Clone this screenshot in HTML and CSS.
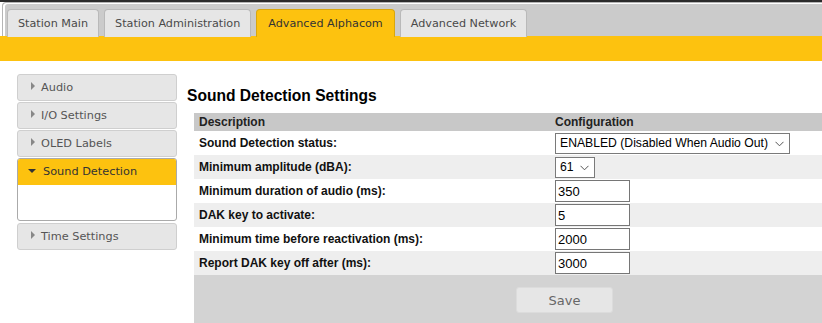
FILE: index.html
```html
<!DOCTYPE html>
<html lang="en">

<head>
    <meta charset="UTF-8">
    <meta name="viewport" content="width=device-width, initial-scale=1.0">
    <title>Sound Detection Settings</title>
    <link rel="stylesheet" href="styles.css">
</head>

<body>
    <div class="topline"></div>
    <div class="tabbar">
        <ul class="tabs">
            <li><a href="#">Station Main</a></li>
            <li><a href="#">Station Administration</a></li>
            <li class="active"><a href="#">Advanced Alphacom</a></li>
            <li><a href="#">Advanced Network</a></li>
        </ul>
    </div>
    <div class="band"></div>

    <div class="main">
        <ul class="side">
            <li class="item"><span class="arrow"></span>Audio</li>
            <li class="item"><span class="arrow"></span>I/O Settings</li>
            <li class="item"><span class="arrow"></span>OLED Labels</li>
            <li class="item open">
                <div class="item-head"><span class="arrow down"></span>Sound Detection</div>
                <div class="item-body"></div>
            </li>
            <li class="item"><span class="arrow"></span>Time Settings</li>
        </ul>

        <div class="content">
            <h2>Sound Detection Settings</h2>
            <div class="table">
                <div class="row head">
                    <div class="desc">Description</div>
                    <div class="conf">Configuration</div>
                </div>
                <div class="row">
                    <div class="desc">Sound Detection status:</div>
                    <div class="conf">
                        <div class="select wide">
                            <select>
                                <option>ENABLED (Disabled When Audio Out)</option>
                                <option>DISABLED</option>
                            </select>
                            <svg class="chev" width="9" height="6" viewBox="0 0 9 6"><path d="M0.5 0.8 L4.5 4.8 L8.5 0.8" fill="none" stroke="#555" stroke-width="1"/></svg>
                        </div>
                    </div>
                </div>
                <div class="row alt">
                    <div class="desc">Minimum amplitude (dBA):</div>
                    <div class="conf">
                        <div class="select small">
                            <select>
                                <option>61</option>
                            </select>
                            <svg class="chev" width="9" height="6" viewBox="0 0 9 6"><path d="M0.5 0.8 L4.5 4.8 L8.5 0.8" fill="none" stroke="#555" stroke-width="1"/></svg>
                        </div>
                    </div>
                </div>
                <div class="row">
                    <div class="desc">Minimum duration of audio (ms):</div>
                    <div class="conf"><input type="text" value="350"></div>
                </div>
                <div class="row alt">
                    <div class="desc">DAK key to activate:</div>
                    <div class="conf"><input type="text" value="5"></div>
                </div>
                <div class="row">
                    <div class="desc">Minimum time before reactivation (ms):</div>
                    <div class="conf"><input type="text" value="2000"></div>
                </div>
                <div class="row alt">
                    <div class="desc">Report DAK key off after (ms):</div>
                    <div class="conf"><input type="text" value="3000"></div>
                </div>
                <div class="foot">
                    <button class="save">Save</button>
                </div>
            </div>
        </div>
    </div>
</body>

</html>
```

FILE: styles.css
```css
* {
    margin: 0;
    padding: 0;
    box-sizing: border-box;
}

body {
    background-color: white;
    font-family: "Liberation Sans", Arial, sans-serif;
    overflow: hidden;
}

.topline {
    height: 2px;
    background-color: #2b2b2b;
}

.tabbar {
    height: 34px;
    margin-left: 2px;
    padding: 6px 0 0 4px;
    background-color: #cbcbcb;
    border-top: 1px solid #b5b5b5;
    border-left: 1px solid #b5b5b5;
    border-top-left-radius: 4px;
    box-shadow: inset 2px 1px 0 #fff;
}

.tabs {
    display: flex;
    gap: 5px;
    list-style: none;
    height: 100%;
}

.tabs li {
    height: 28px;
    border: 1px solid #b9b9b9;
    border-bottom: none;
    border-radius: 4px 4px 0 0;
    background-color: #e6e6e6;
}

.tabs a {
    display: block;
    padding: 0 10px;
    line-height: 27px;
    font-family: "DejaVu Sans", Verdana, sans-serif;
    font-size: 11.2px;
    color: #4a4a4a;
    text-decoration: none;
}

.tabs li.active {
    background-color: #fdc20f;
    border-color: #d9a70c;
}

.tabs li.active a {
    padding: 0 11px;
    color: #333;
}

.band {
    height: 25px;
    background-color: #fdc20f;
}

.main {
    display: flex;
    padding-top: 13px;
}

.side {
    list-style: none;
    width: 160px;
    margin-left: 17px;
    flex-shrink: 0;
}

.item {
    height: 27px;
    margin-bottom: 1px;
    padding-left: 13px;
    line-height: 26px;
    background-color: #e6e6e6;
    border: 1px solid #cfcfcf;
    border-radius: 3px;
    font-family: "DejaVu Sans", Verdana, sans-serif;
    font-size: 11.3px;
    color: #555;
}

.arrow {
    display: inline-block;
    width: 0;
    height: 0;
    margin-right: 6px;
    vertical-align: 1px;
    border-top: 4px solid transparent;
    border-bottom: 4px solid transparent;
    border-left: 4px solid #888;
}

.arrow.down {
    margin-right: 7px;
    vertical-align: 2px;
    border-left: 4px solid transparent;
    border-right: 4px solid transparent;
    border-top: 4px solid #333;
    border-bottom: none;
}

.item.open {
    height: 63px;
    padding-left: 0;
    margin-bottom: 2px;
    background-color: white;
    border-color: #aaa;
    overflow: hidden;
}

.item-head {
    height: 26px;
    padding-left: 10px;
    background-color: #fdc20f;
    color: #333;
}

.content {
    flex: 1;
    padding-left: 10px;
}

h2 {
    margin-top: 13px;
    margin-bottom: 8px;
    font-size: 15.6px;
    font-weight: bold;
    color: #000;
    line-height: 18px;
}

.table {
    margin-left: 7px;
    width: 640px;
}

.row {
    display: flex;
    height: 24px;
    align-items: center;
    font-size: 12px;
    font-weight: bold;
    color: #111;
}

.row.head {
    height: 18px;
    background-color: #c8c8c8;
    color: #222;
}

.row.alt {
    background-color: #eeeeee;
}

.desc {
    width: 361px;
    padding-left: 5px;
}

.conf {
    flex: 1;
}

.select {
    position: relative;
    display: inline-block;
    vertical-align: top;
}

.select select {
    appearance: none;
    height: 21px;
    padding-left: 4px;
    border: 1px solid #7a7a7a;
    background-color: white;
    font-family: "Liberation Sans", Arial, sans-serif;
    font-size: 12.2px;
    color: #000;
    border-radius: 0;
}

.select.wide select {
    width: 235px;
}

.select.small select {
    width: 40px;
}

.chev {
    position: absolute;
    right: 6px;
    top: 8px;
    pointer-events: none;
}

input {
    display: block;
    width: 75px;
    height: 22px;
    padding-left: 2px;
    border: 1px solid #767676;
    font-family: "Liberation Sans", Arial, sans-serif;
    font-size: 13px;
    color: #000;
}

.foot {
    height: 60px;
    padding: 12px 0 0 322px;
    background-color: #d3d3d3;
}

.save {
    width: 97px;
    height: 26px;
    border: 1px solid #dcdcdc;
    border-radius: 3px;
    background-color: #e6e6e6;
    font-family: "DejaVu Sans", Verdana, sans-serif;
    font-size: 13px;
    color: #666;
}
```
